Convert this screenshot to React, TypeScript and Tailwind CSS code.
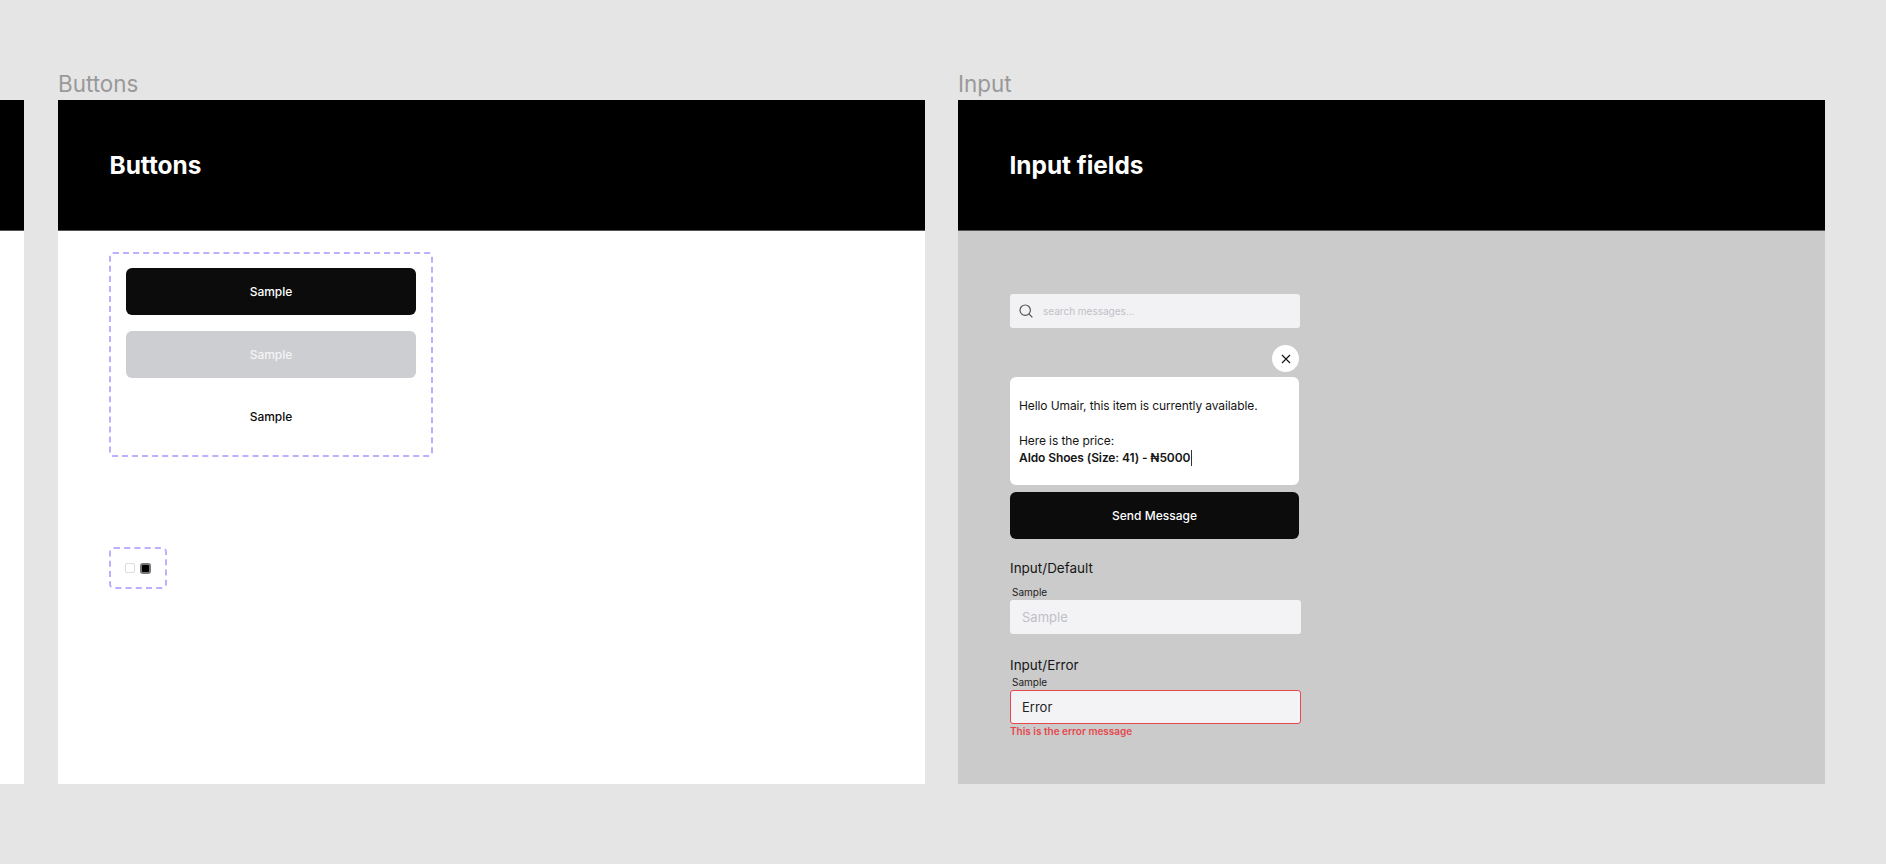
import React from "react";

const Frame = ({
  label,
  title,
  body,
  children,
}: {
  label: string;
  title: string;
  body: string;
  children: React.ReactNode;
}) => {
  return (
    <div className="w-[867px] shrink-0">
      <div className="h-[30px] pb-[4px] flex items-center text-[22.4px] leading-[27px] text-[#999999]">
        {label}
      </div>
      <div className="h-[131px] bg-black flex items-center pl-[51.5px] pt-[1px] border-b border-[#555555]">
        <h1 className="text-[24.4px] font-bold text-white">{title}</h1>
      </div>
      <div className={`h-[553px] ${body}`}>{children}</div>
    </div>
  );
};

const Button = ({ text, kind }: { text: string; kind: string }) => {
  return (
    <div
      className={`h-[47px] rounded-[6px] flex items-center justify-center text-[12px] font-medium ${kind}`}
    >
      {text}
    </div>
  );
};

export default function App() {
  return (
    <div className="w-[1886px] h-[864px] overflow-hidden bg-[#e5e5e5] pt-[70px] font-['Inter',sans-serif]">
      <div className="flex gap-[33px]">
        <div className="w-[24px] mr-[1px] shrink-0 mt-[30px]">
          <div className="h-[131px] bg-black border-b border-[#555555]"></div>
          <div className="h-[553px] bg-white"></div>
        </div>

        <Frame label="Buttons" title="Buttons" body="bg-white pl-[51px] pt-[21px]">
          <div className="w-[324px] h-[205px] rounded-[4px] border-2 border-dashed border-[#bfaeff] px-[15px] pt-[14px] flex flex-col gap-[16px]">
            <Button text="Sample" kind="bg-[#0c0c0c] text-white" />
            <Button text="Sample" kind="bg-[#cdced2] text-[#f4f4f5] pt-[1px]" />
            <Button text="Sample" kind="text-[#0c0c0c] pb-[1px]" />
          </div>
          <div className="mt-[90px] w-[58px] h-[42px] rounded-[5px] border-2 border-dashed border-[#bfaeff] flex items-center justify-center gap-[5px]">
            <div className="w-[10px] h-[10px] rounded-[2px] border border-[#dcdcdc]"></div>
            <div className="w-[11px] h-[11px] rounded-[3px] border-2 border-[#777777] bg-black"></div>
          </div>
        </Frame>

        <Frame label="Input" title="Input fields" body="bg-[#cbcbcb] pl-[52px] pt-[63px]">
          <div className="w-[290px]">
            <div className="h-[34px] rounded-[3px] bg-[#f2f2f4] flex items-center pl-[9px] gap-[10px]">
              <svg width="14" height="14" viewBox="0 0 14 14" fill="none" stroke="#555555" strokeWidth="1.2">
                <circle cx="6.2" cy="6.2" r="5.2" />
                <path d="M10 10l3.4 3.4" />
              </svg>
              <span className="text-[10px] text-[#c0c0c6]">search messages...</span>
            </div>
            <div className="flex justify-end pr-[1px] mt-[17px]">
              <div className="w-[27px] h-[27px] rounded-full bg-white flex items-center justify-center">
                <svg width="10" height="10" viewBox="0 0 10 10" fill="none" stroke="#111111" strokeWidth="1.1">
                  <path d="M1 1l8 8M9 1l-8 8" />
                </svg>
              </div>
            </div>
            <div className="w-[289px] h-[108px] mt-[5px] rounded-[6px] bg-white px-[9px] pt-[19.5px] text-[12px] leading-[17.6px] tracking-[-0.1px] text-[#151515]">
              <p>Hello Umair, this item is currently available.</p>
              <p className="mt-[17.6px]">Here is the price:</p>
              <p className="font-semibold flex items-center">
                Aldo Shoes (Size: 41) - ₦5000
                <span className="ml-[1px] w-px h-[16px] bg-[#333333]"></span>
              </p>
            </div>
            <div className="w-[289px] mt-[7px]">
              <Button text="Send Message" kind="bg-[#0c0c0c] text-white pt-[1px]" />
            </div>
            <p className="mt-[20px] text-[13.5px] leading-[18px] text-[#161616]">Input/Default</p>
            <p className="mt-[8px] pl-[2px] text-[10px] leading-[14px] text-[#222222]">Sample</p>
            <div className="w-[291px] h-[34px] mt-[1px] rounded-[3px] bg-[#f3f3f5] flex items-center pl-[12px] pt-[2px] text-[13px] text-[#c0c0c6]">
              Sample
            </div>
            <p className="mt-[22px] text-[13.5px] leading-[18px] text-[#161616]">Input/Error</p>
            <p className="mt-[1px] pl-[2px] text-[10px] leading-[14px] text-[#222222]">Sample</p>
            <div className="w-[291px] h-[34px] mt-[1px] rounded-[3px] bg-[#f3f3f5] border border-[#e5484d] flex items-center pl-[11px] pt-[2px] text-[13px] text-[#222222]">
              Error
            </div>
            <p className="text-[10px] leading-[14px] font-semibold text-[#e5484d]">This is the error message</p>
          </div>
        </Frame>
      </div>
    </div>
  );
}
